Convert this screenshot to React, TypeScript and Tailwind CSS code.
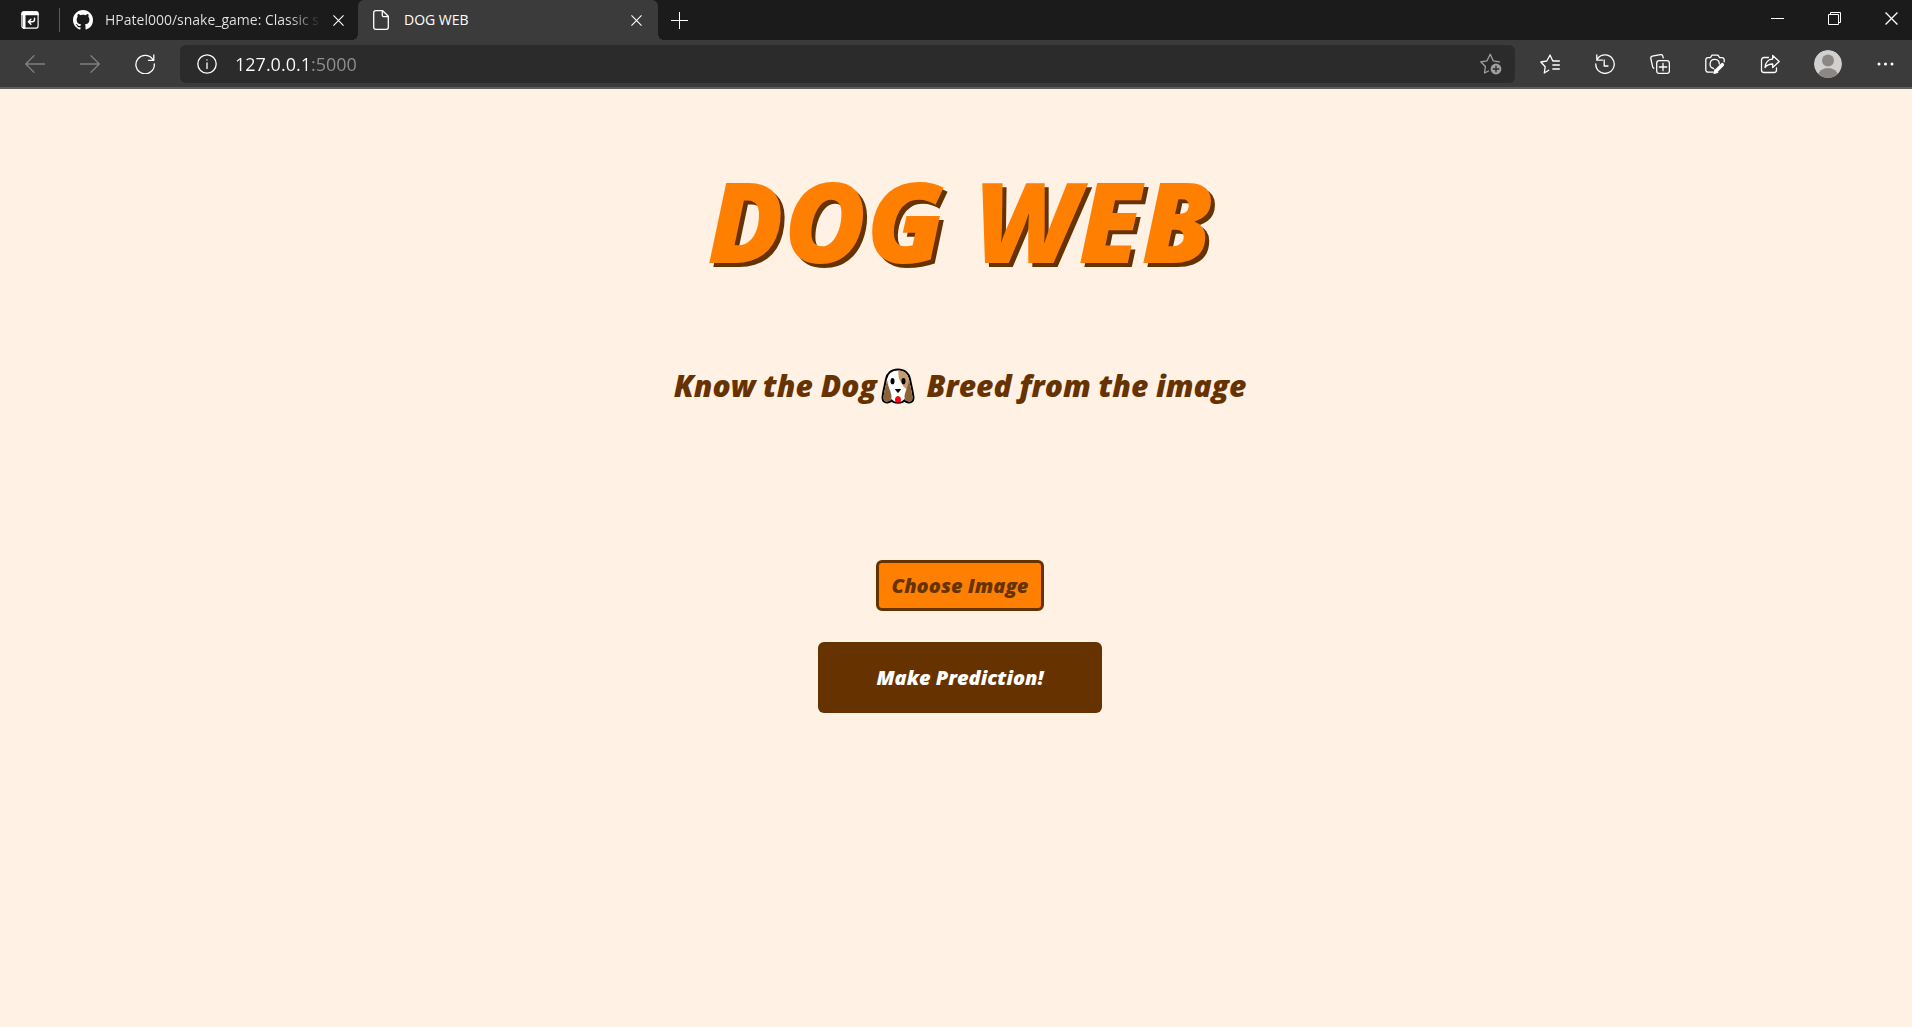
import type { ReactNode } from 'react';

function Icon({ size = 20, stroke = 1.3, children }: { size?: number; stroke?: number; children: ReactNode }) {
  return (
    <svg width={size} height={size} viewBox="0 0 20 20" fill="none" stroke="currentColor" strokeWidth={stroke} strokeLinecap="round" strokeLinejoin="round" aria-hidden="true">
      {children}
    </svg>
  );
}

function ToolButton({ label, children, dim = false }: { label: string; children: ReactNode; dim?: boolean }) {
  return (
    <button type="button" aria-label={label} className={dim ? 'flex w-[55px] shrink-0 justify-center text-[#808080]' : 'flex w-[55px] shrink-0 justify-center text-white'}>
      {children}
    </button>
  );
}

function CloseIcon({ size }: { size: number }) {
  return (
    <svg width={size} height={size} viewBox="0 0 12 12" stroke="currentColor" strokeWidth="1.2" aria-hidden="true">
      <path d="M.5.5l11 11M11.5.5l-11 11" />
    </svg>
  );
}

function TabStrip() {
  return (
    <div className="flex h-10 bg-[#1b1b1b] text-sm text-white">
      <button type="button" aria-label="Tab actions" className="flex w-[59px] items-center justify-center">
        <Icon size={18}>
          <rect x="1" y="1" width="18" height="18" rx="2.200" />
          <path d="M1 3a2 2 0 0 1 2-2h14a2 2 0 0 1 2 2v1H1z" fill="currentColor" />
          <path d="M3.500 4v14.500" strokeWidth="3" />
          <path d="M15 8v1.500a2.500 2.500 0 0 1-2.500 2.500H8.500M11 9.200L8.200 12l2.800 2.800" strokeWidth="1.600" />
        </Icon>
      </button>
      <span className="my-2 w-px bg-[#5c5c5c]" />
      <div className="flex w-[298px] items-center pl-[13px] pr-[14px]">
        <svg width="20" height="20" viewBox="0 0 16 16" fill="currentColor" className="shrink-0" aria-hidden="true">
          <path d="M8 0C3.58 0 0 3.58 0 8c0 3.54 2.29 6.53 5.47 7.59.4.07.55-.17.55-.38 0-.19-.01-.82-.01-1.49-2.01.37-2.53-.49-2.69-.94-.09-.23-.48-.94-.82-1.13-.28-.15-.68-.52-.01-.53.63-.01 1.08.58 1.23.82.72 1.21 1.87.87 2.33.66.07-.52.28-.87.51-1.07-1.78-.2-3.64-.89-3.64-3.95 0-.87.31-1.59.82-2.15-.08-.2-.36-1.02.08-2.12 0 0 .67-.21 2.2.82.64-.18 1.32-.27 2-.27s1.36.09 2 .27c1.53-1.04 2.2-.82 2.2-.82.44 1.1.16 1.92.08 2.12.51.56.82 1.27.82 2.15 0 3.07-1.87 3.75-3.65 3.95.29.25.54.73.54 1.48 0 1.07-.01 1.93-.01 2.2 0 .21.15.46.55.38A8.01 8.01 0 0 0 16 8c0-4.42-3.58-8-8-8z" />
        </svg>
        <span className="ml-3 w-[216px] overflow-hidden whitespace-nowrap bg-[linear-gradient(to_right,#e6e6e6_85%,transparent)] bg-clip-text text-transparent">
          HPatel000/snake_game: Classic s
        </span>
        <button type="button" aria-label="Close tab" className="ml-auto"><CloseIcon size={11} /></button>
      </div>
      <div className="relative flex w-[300px] items-center rounded-t-md bg-[#3b3b3b] pl-[15px] pr-4 before:absolute before:-left-1.5 before:bottom-0 before:size-1.5 before:bg-[radial-gradient(circle_at_top_left,transparent_6px,#3b3b3b_6px)] after:absolute after:-right-1.5 after:bottom-0 after:size-1.5 after:bg-[radial-gradient(circle_at_top_right,transparent_6px,#3b3b3b_6px)]">
        <svg width="16" height="20" viewBox="0 0 16 20" fill="none" stroke="currentColor" strokeWidth="1.3" strokeLinejoin="round" aria-hidden="true">
          <path d="M2.7.7h7l5.6 5.6v11a2 2 0 0 1-2 2H2.7a2 2 0 0 1-2-2V2.7a2 2 0 0 1 2-2z" />
          <path d="M9.3.9v4.3a1.5 1.5 0 0 0 1.5 1.5h4.4" />
        </svg>
        <span className="ml-[15px]">DOG WEB</span>
        <button type="button" aria-label="Close tab" className="ml-auto"><CloseIcon size={11} /></button>
      </div>
      <button type="button" aria-label="New tab" className="flex w-[42px] items-center justify-center">
        <svg width="17" height="17" viewBox="0 0 17 17" stroke="currentColor" strokeWidth="1" aria-hidden="true">
          <path d="M8.5 0v17M0 8.5h17" />
        </svg>
      </button>
      <div className="ml-auto flex gap-[15px] pb-1">
        <button type="button" aria-label="Minimize" className="flex w-[42px] items-center justify-center">
          <span className="h-px w-[13px] bg-white" />
        </button>
        <button type="button" aria-label="Restore" className="flex w-[42px] items-center justify-center">
          <svg width="13" height="13" viewBox="0 0 13 13" fill="none" stroke="currentColor" aria-hidden="true">
            <path d="M.5 2.5h10v10H.5zM2.5 2V.5h10v10H11" />
          </svg>
        </button>
        <button type="button" aria-label="Close window" className="flex w-[42px] items-center justify-center">
          <CloseIcon size={13} />
        </button>
      </div>
    </div>
  );
}

function Toolbar() {
  return (
    <div className="flex h-[49px] items-center border-b-2 border-[#5e5e5e] bg-[#3b3b3b] pl-[7px]">
      <ToolButton label="Back" dim><Icon><path d="M19.5 10H.7M9 1.7L.7 10 9 18.3" /></Icon></ToolButton>
      <ToolButton label="Forward" dim><Icon><path d="M.5 10h18.8M11 1.7l8.3 8.3-8.3 8.3" /></Icon></ToolButton>
      <ToolButton label="Refresh">
        <Icon><path d="M18.2 6.2A9.2 9.2 0 1 0 19.3 10M18.8.9v5.4h-5.4" /></Icon>
      </ToolButton>
      <div className="ml-2 flex h-[38px] flex-1 items-center rounded-md bg-[#2b2b2b] pl-[17px] pr-[13px]">
        <button type="button" aria-label="Site information" className="text-white">
          <Icon><circle cx="10" cy="10" r="9.2" /><path d="M10 9v5.5M10 5.8v.3" /></Icon>
        </button>
        <input
          type="text"
          aria-label="Address"
          defaultValue="127.0.0.1:5000"
          className="ml-[18px] min-w-0 flex-1 bg-[linear-gradient(to_right,#fff_77px,#909090_77px)] bg-clip-text text-lg text-transparent caret-white outline-none"
        />
        <button type="button" aria-label="Add to favorites" className="text-[#a0a0a0]">
          <svg width="22" height="22" viewBox="0 0 22 22" fill="none" stroke="currentColor" strokeWidth="1.3" strokeLinecap="round" strokeLinejoin="round" aria-hidden="true">
            <path d="M8.5 18l-4 2 .9-6.5L.8 8.8l6.2-1L10.2 1.300l3 6.500 6.300 1" />
            <circle cx="16" cy="16" r="5.4" fill="currentColor" stroke="none" />
            <path d="M16 13.200v5.600M13.200 16h5.600" stroke="#2b2b2b" />
          </svg>
        </button>
      </div>
      <div className="ml-[7px] flex items-center">
        <ToolButton label="Favorites">
          <Icon><path d="M8.700 16.300L4.300 19l.9-6.200L.8 8l6-1L10 1l2.800 6h6.600M12.800 11h6.600M12.800 15h6.600" /></Icon>
        </ToolButton>
        <ToolButton label="History">
          <Icon><path d="M2.600 4.700A9.200 9.200 0 1 1 .8 10M1.800.8v5.400h5.600M9.200 6v6h3.800" /></Icon>
        </ToolButton>
        <ToolButton label="Collections">
          <Icon>
            <rect x="6.700" y="6.700" width="12.700" height="12.700" rx="2.500" />
            <path d="M13 9.300v7.400M9.300 13h7.400M3.800 14.300A3 3 0 0 1 2.600 12.600L.8 4.500a2 2 0 0 1 1.500-2.300L10.500.6a2 2 0 0 1 2.300 1.500l.4 1.800" />
          </Icon>
        </ToolButton>
        <ToolButton label="Web capture">
          <Icon>
            <path d="M8 18.200H3a2.200 2.200 0 0 1-2.200-2.200V5.800A2.200 2.200 0 0 1 3 3.600h2.400L7 1.200h6l1.600 2.400H17a2.200 2.200 0 0 1 2.200 2.200v2M8.500 14.500a4.600 4.600 0 1 1 5.800-4.500" />
            <path d="M17.300 10.700l-6.200 6.200" strokeWidth="3.600" />
            <path d="M9 19.300l1-3.600 2.600 2.600z" fill="currentColor" />
          </Icon>
        </ToolButton>
        <ToolButton label="Share">
          <Icon>
            <path d="M8.500 3.500H4A2.500 2.500 0 0 0 1.500 6v10A2.500 2.500 0 0 0 4 18.500h10a2.500 2.500 0 0 0 2.500-2.500v-2" />
            <path d="M12.700 1.500l6.500 6-6.500 6V10c-3.200 0-5.700 1-7.700 3.500.3-5 3.500-8.300 7.700-8.500z" />
          </Icon>
        </ToolButton>
        <button type="button" aria-label="Profile" className="flex w-[61px] justify-center">
          <svg width="28" height="28" viewBox="0 0 28 28" className="rounded-full" aria-hidden="true">
            <circle cx="14" cy="14" r="14" fill="#d2d0ce" />
            <circle cx="14" cy="10.500" r="6" fill="#8b8785" />
            <ellipse cx="14" cy="26" rx="10" ry="8" fill="#8b8785" />
          </svg>
        </button>
        <button type="button" aria-label="Settings and more" className="flex w-[54px] justify-center text-white">
          <svg width="17" height="4" viewBox="0 0 17 4" fill="currentColor" aria-hidden="true">
            <circle cx="2" cy="2" r="1.500" /><circle cx="8.500" cy="2" r="1.500" /><circle cx="15" cy="2" r="1.500" />
          </svg>
        </button>
      </div>
    </div>
  );
}

function DogFace() {
  return (
    <svg width="34" height="36" viewBox="0 0 34 36" role="img" aria-label="Dog" className="ml-1 shrink-0">
      <path d="M17 1.500C10 1.500 6 6 5 11 4 17 1.700 25 1.500 30c0 3.500 3 5 5.800 4.300 1.500-.3 2.700-1 3.400-1.800 1.500 2 3.500 2.300 6.300 2.300s4.800-.3 6.300-2.300c.7.8 1.900 1.500 3.400 1.800 2.800.7 5.800-.8 5.800-4.300C32.300 25 30 17 29 11 28 6 24 1.500 17 1.500z" fill="#fff" stroke="#000" strokeWidth="2" />
      <path d="M17.300 2.600c6 0 9.700 4 10.600 8.700.7 3.600 1 7.700.6 9.700-6 1-6.500-5-9-7.500-2-2-2.200-6-2.200-10.900z" fill="#c69c6d" />
      <path d="M6 12c-1 5-3.400 13-3.400 18 0 3 2.700 3.800 4.700 3.300 3-.8 3.600-3.300 3-6.300C9.700 23 6.800 18 6 12zM28 12c1 5 3.400 13 3.400 18 0 3-2.700 3.800-4.700 3.300-3-.8-3.600-3.300-3-6.300.8-4 3.500-9 4.300-15z" fill="#8c6239" />
      <ellipse cx="11.500" cy="13.200" rx="2" ry="3.100" /><ellipse cx="22.500" cy="13.200" rx="2" ry="3.100" />
      <path d="M14.500 21.500h5L17 24.500z" strokeLinejoin="round" stroke="#000" />
      <path d="M14 31.500c0-2 1.700-3.500 3-3.500s3 1.500 3 3.500-1 3.300-3 3.300-3-1.300-3-3.300z" fill="#ff0010" />
    </svg>
  );
}

export default function App() {
  return (
    <div className="flex min-h-screen flex-col bg-[#fff1e4] font-['Open_Sans','Noto_Sans',sans-serif]">
      <header>
        <TabStrip />
        <Toolbar />
      </header>
      <main className="flex flex-col items-center pl-2 pt-[71px] font-extrabold italic text-[#663300]">
        <h1 className="text-[112px] leading-[120px] text-[#ff8000] [text-shadow:4px_4px_#663300]">DOG WEB</h1>
        <h2 className="mt-[86px] flex items-center text-[30px] leading-10">
          Know the Dog
          <DogFace />
          <span className="ml-3">Breed from the image</span>
        </h2>
        <form className="mt-[154px] flex flex-col items-center">
          <label htmlFor="dog-image" className="flex h-[51px] w-[168px] cursor-pointer items-center justify-center rounded-md border-[3px] border-[#663300] bg-[#ff8000] text-xl">
            Choose Image
          </label>
          <input id="dog-image" type="file" accept="image/*" className="sr-only" />
          <button type="button" className="mt-[31px] h-[71px] w-[284px] rounded-md bg-[#663300] text-xl text-white">
            Make Prediction!
          </button>
        </form>
      </main>
    </div>
  );
}
